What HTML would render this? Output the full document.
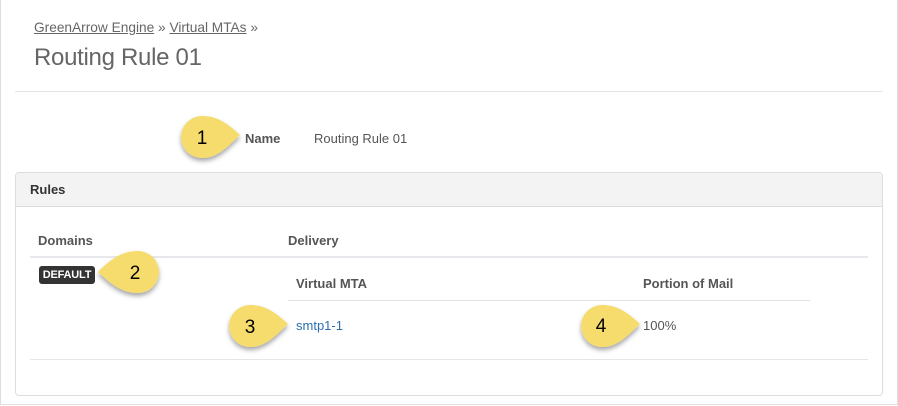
<!DOCTYPE html>
<html><head><style>
body{margin:0;width:898px;height:406px;position:relative;background:#fff;font-family:"Liberation Sans",sans-serif;color:#555;overflow:hidden}
.a{position:absolute;white-space:nowrap}
.b{font-weight:bold;color:#555;font-size:13px}
</style></head><body>
<div class="a" style="left:0;top:0;width:896px;height:404px;border:1px solid #ddd;border-top:none"></div>
<div class="a" style="left:34px;top:20px;font-size:13.7px;color:#666"><span style="text-decoration:underline">GreenArrow Engine</span> » <span style="text-decoration:underline">Virtual MTAs</span> »</div>
<div class="a" style="left:34px;top:44px;font-size:24px;color:#666;letter-spacing:-0.3px">Routing Rule 01</div>
<div class="a" style="left:15px;top:91px;width:868px;height:1px;background:#e5e5e5"></div>
<div class="a b" style="left:245px;top:131px">Name</div>
<div class="a" style="left:314px;top:131px;font-size:13px;color:#555">Routing Rule 01</div>
<div class="a" style="left:15px;top:172px;width:866px;height:222px;border:1px solid #ddd;border-radius:4px;overflow:hidden">
  <div style="height:33px;background:#f3f3f3;border-bottom:1px solid #ddd"></div>
</div>
<div class="a b" style="left:30px;top:182px;color:#333">Rules</div>
<div class="a b" style="left:38px;top:233px">Domains</div>
<div class="a b" style="left:288px;top:233px">Delivery</div>
<div class="a" style="left:30px;top:256px;width:838px;height:2px;background:#e6e8eb"></div>
<div class="a" style="left:39px;top:266px;width:56px;height:18px;line-height:18px;text-align:center;background:#333;color:#fff;font-size:11px;font-weight:bold;border-radius:3px;letter-spacing:-0.2px">DEFAULT</div>
<div class="a b" style="left:296px;top:276px">Virtual MTA</div>
<div class="a b" style="left:643px;top:276px">Portion of Mail</div>
<div class="a" style="left:288px;top:300px;width:522px;height:1px;background:#e2e2e2"></div>
<div class="a" style="left:296px;top:318px;font-size:13px;color:#2a6fb0">smtp1-1</div>
<div class="a" style="left:643px;top:318px;font-size:13px;color:#555">100%</div>
<div class="a" style="left:30px;top:359px;width:838px;height:1px;background:#e6e6e6"></div>
<svg class="a" style="left:0;top:0" width="898" height="406">
<defs><filter id="s" x="-50%" y="-50%" width="200%" height="200%"><feDropShadow dx="0" dy="3" stdDeviation="2.5" flood-color="#000" flood-opacity="0.35"/></filter></defs>
<g fill="#f6dc6c" filter="url(#s)">
<path transform="translate(202,137)" d="M38,-2 C26,-13 16,-21 0,-21 A21,21 0 1 0 0,21 C16,21 26,9 38,-2Z"/>
<path transform="translate(138,272) scale(-1,1)" d="M40,0 C28,-12 17,-21 0,-21 A21,21 0 1 0 0,21 C17,21 28,11 40,0Z"/>
<path transform="translate(250,326)" d="M38,-2 C26,-13 16,-21 0,-21 A21,21 0 1 0 0,21 C16,21 26,9 38,-2Z"/>
<path transform="translate(602,326)" d="M38,-2 C26,-13 16,-21 0,-21 A21,21 0 1 0 0,21 C16,21 26,9 38,-2Z"/>
</g>
<g font-family="Liberation Sans,sans-serif" font-size="19" fill="#000" text-anchor="middle">
<text x="202" y="144">1</text><text x="135" y="279">2</text><text x="250" y="333">3</text><text x="601" y="332">4</text>
</g>
</svg>
</body></html>
